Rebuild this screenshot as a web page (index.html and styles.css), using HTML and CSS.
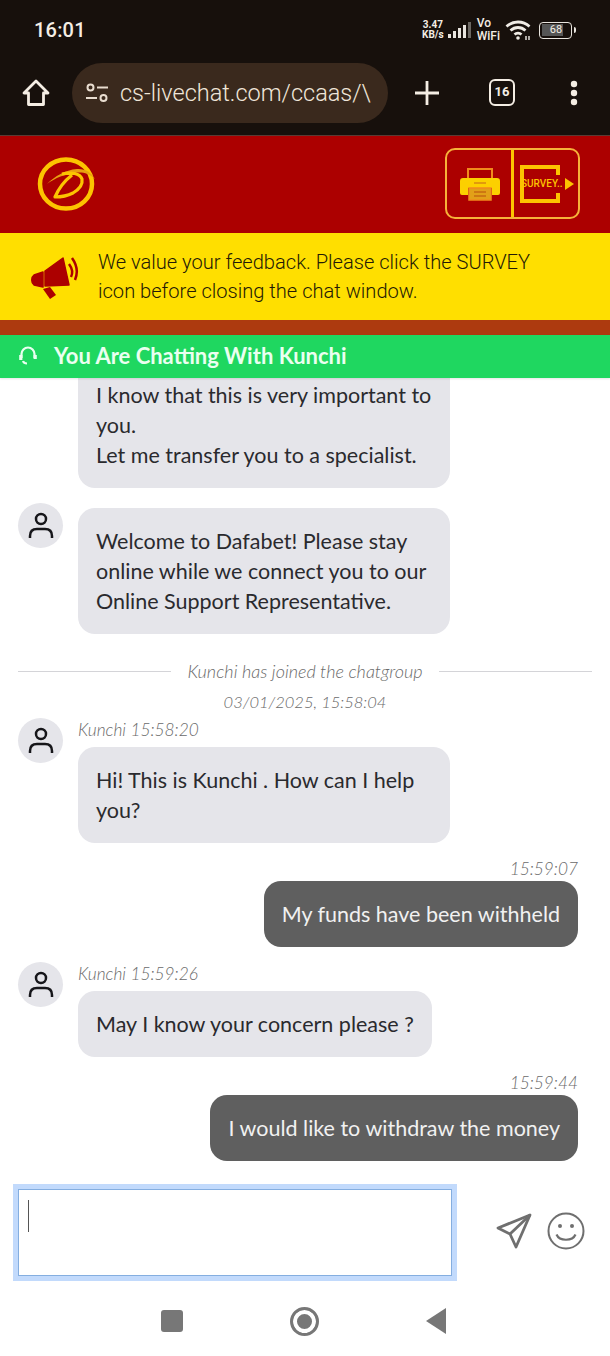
FILE: index.html
```html
<!DOCTYPE html>
<html lang="en">
<head>
<meta charset="utf-8">
<title>Live chat</title>
<link rel="stylesheet" href="styles.css">
</head>
<body>
<div class="phone">
  <div class="chrome">
    <div class="status">
      <span class="clock">16:01</span>
      <div class="status-icons">
        <span class="speed">3.47<br>KB/s</span>
        <svg class="signal" width="24" height="18" viewBox="0 0 24 18"><rect x="0" y="12" width="3" height="4" fill="#e8e4de"/><rect x="5" y="9" width="3" height="7" fill="#e8e4de"/><rect x="10" y="6" width="3" height="10" fill="#e8e4de"/><rect x="15" y="3" width="3" height="13" fill="#e8e4de"/><rect x="20" y="0" width="3" height="16" fill="#6b6762"/></svg>
        <span class="vowifi">Vo<br>WiFi</span>
        <svg class="wifi" width="27" height="22" viewBox="0 0 27 22" fill="none" stroke="#f0ece6" stroke-width="2.8"><path d="M1.500 7.500C8 1.500 18 1.500 24.500 7.500"/><path d="M5.500 11.500C10 7.500 16 7.500 20.500 11.500"/><path d="M9.500 15.500C11.500 13.800 14.500 13.800 16.500 15.500"/><circle cx="13" cy="19" r="1.800" fill="#f0ece6" stroke="none"/><path d="M21 21v-4M24 21v-4" stroke-width="1.400"/></svg>
        <div class="battery"><span class="battery-level">68</span></div>
      </div>
    </div>
    <div class="toolbar">
      <svg class="home" width="28" height="28" viewBox="0 0 28 28" fill="none" stroke="#f4ede4" stroke-width="2.800" stroke-linejoin="round"><path d="M14 2L2 14h4.500v11.500h15V14H26Z"/></svg>
      <div class="url">
        <svg width="24" height="20" viewBox="0 0 24 20" fill="none" stroke="#e8dccf" stroke-width="2"><circle cx="5.500" cy="4.500" r="3"/><path d="M12 4.500h11M1 15h11"/><circle cx="18.500" cy="15" r="3"/></svg>
        <span class="url-text">cs-livechat.com/ccaas/\</span>
      </div>
      <svg class="plus" width="26" height="26" viewBox="0 0 26 26" stroke="#f4ede4" stroke-width="2.800"><path d="M13 1v24M1 13h24"/></svg>
      <div class="tabs">16</div>
      <svg class="dots" width="8" height="26" viewBox="0 0 8 26" fill="#f4ede4"><circle cx="4" cy="4" r="3.200"/><circle cx="4" cy="13" r="3.200"/><circle cx="4" cy="22" r="3.200"/></svg>
    </div>
  </div>

  <header class="brand">
    <svg class="logo" width="60" height="56" viewBox="0 0 60 56" fill="none">
      <ellipse cx="29" cy="27" rx="26" ry="24.500" stroke="#fcc400" stroke-width="4.500"/>
      <path d="M10 27C18 19 28 13 40 12C48 11.500 54 15 58 22C52 16 46 15 40 15.500C28 17 18 21 10 27Z" fill="#e8a010"/>
      <path d="M25 17C34 15 43 16 45 22C46 28 41 33 36 36C30 39 24 40 18 40C21 33 26 25 35 18" stroke="#fcc400" stroke-width="3.200" stroke-linejoin="round"/>
    </svg>
    <div class="actions">
      <div class="action action-print">
        <svg width="40" height="34" viewBox="0 0 40 34"><path d="M8 2h24v11H8Z" fill="none" stroke="#f08a1c" stroke-width="2"/><path d="M3 11h34a3 3 0 0 1 3 3v12a2 2 0 0 1-2 2h-6v-7H8v7H2a2 2 0 0 1-2-2V14a3 3 0 0 1 3-3Z" fill="#fcd000"/><path d="M14 16h12" stroke="#d98a10" stroke-width="1.500"/><path d="M9 21h22v12H9Z" fill="#e2a018" stroke="#f08a1c" stroke-width="1.500"/><path d="M14 25h12M14 29h12" stroke="#c66a10" stroke-width="1.500"/></svg>
      </div>
      <div class="action action-survey">
        <div class="survey-box"><span class="survey-text">SURVEY..</span></div>
        <span class="survey-arrow"></span>
      </div>
    </div>
  </header>

  <div class="notice">
    <svg class="horn" width="50" height="44" viewBox="0 0 50 44" fill="#ac0000"><path d="M14 15L32 2L38 29L14 30Z" stroke="#ac0000" stroke-width="1.500" stroke-linejoin="round"/><path d="M12 16L3 19C0 21 0 27 3 29L12 31Z" stroke="#ac0000" stroke-width="1.500" stroke-linejoin="round"/><path d="M12 33L19 31L25 39L19 43Z"/><path d="M38 8C41 12 42 17 40 21" fill="none" stroke="#ac0000" stroke-width="2.500"/><path d="M41 2C46 9 47 17 44 24" fill="none" stroke="#ac0000" stroke-width="2.500"/></svg>
    <p class="notice-text">We value your feedback. Please click the SURVEY<br>icon before closing the chat window.</p>
  </div>
  <div class="strip"></div>

  <div class="agent-bar">
    <svg width="18" height="20" viewBox="0 0 18 20" fill="none" stroke="#e9fff0" stroke-width="2.200"><path d="M2.500 13V9a6.500 6.500 0 0 1 13 0v4"/><path d="M1.800 10v5M16.200 10v4" stroke-width="3.200"/><path d="M4 16c.5 1.500 2 2.500 4 2.500"/></svg>
    <span>You Are Chatting With Kunchi</span>
  </div>

  <main class="chat">
    <div class="row">
      <div class="avatar-gap"></div>
      <div class="bubble bubble-agent bubble-wide">I know that this is very important to you.<br>Let me transfer you to a specialist.</div>
    </div>
    <div class="row row-next">
      <div class="avatar"><svg width="26" height="30" viewBox="0 0 26 30" fill="none" stroke="#16161a" stroke-width="2.500"><circle cx="13" cy="8" r="5"/><path d="M2 27v-2c0-5 3-7 7-7h8c4 0 7 2 7 7v2"/></svg></div>
      <div class="bubble bubble-agent bubble-offset bubble-wide">Welcome to Dafabet! Please stay online while we connect you to our Online Support Representative.</div>
    </div>
    <div class="system">
      <span class="rule"></span>
      <span class="system-text"><em>Kunchi</em> has joined the chatgroup</span>
      <span class="rule"></span>
    </div>
    <div class="date">03/01/2025, 15:58:04</div>
    <div class="row row-first">
      <div class="avatar"><svg width="26" height="30" viewBox="0 0 26 30" fill="none" stroke="#16161a" stroke-width="2.500"><circle cx="13" cy="8" r="5"/><path d="M2 27v-2c0-5 3-7 7-7h8c4 0 7 2 7 7v2"/></svg></div>
      <div class="msg">
        <div class="meta">Kunchi 15:58:20</div>
        <div class="bubble bubble-agent bubble-wide">Hi! This is Kunchi . How can I help you?</div>
      </div>
    </div>
    <div class="own">
      <div class="meta">15:59:07</div>
      <div class="bubble bubble-own">My funds have been withheld</div>
    </div>
    <div class="row row-next">
      <div class="avatar"><svg width="26" height="30" viewBox="0 0 26 30" fill="none" stroke="#16161a" stroke-width="2.500"><circle cx="13" cy="8" r="5"/><path d="M2 27v-2c0-5 3-7 7-7h8c4 0 7 2 7 7v2"/></svg></div>
      <div class="msg">
        <div class="meta">Kunchi 15:59:26</div>
        <div class="bubble bubble-agent">May I know your concern please ?</div>
      </div>
    </div>
    <div class="own">
      <div class="meta">15:59:44</div>
      <div class="bubble bubble-own">I would like to withdraw the money</div>
    </div>
  </main>

  <footer class="composer">
    <div class="input"><span class="caret"></span></div>
    <svg class="send" width="36" height="36" viewBox="0 0 36 36" fill="none" stroke="#6f6f6f" stroke-width="2.800" stroke-linejoin="round"><path d="M34 2L2 15l12 6l6 13Z"/><path d="M34 2L14 21"/></svg>
    <svg class="smile" width="38" height="38" viewBox="0 0 38 38" fill="none" stroke="#6f6f6f" stroke-width="2"><circle cx="19" cy="19" r="17.500"/><circle cx="13" cy="14" r="2" fill="#6f6f6f" stroke="none"/><circle cx="25" cy="14" r="2" fill="#6f6f6f" stroke="none"/><path d="M9.500 22.500c3 7 16 7 19 0" stroke-width="2.200"/></svg>
  </footer>

  <nav class="nav">
    <span class="nav-square"></span>
    <span class="nav-home"></span>
    <span class="nav-back"></span>
  </nav>
</div>
</body>
</html>
```

FILE: styles.css
```css
* { box-sizing: border-box; }
html, body { margin: 0; padding: 0; }
body { width: 610px; height: 1356px; overflow: hidden; background: #fff; }
.phone { width: 610px; height: 1356px; display: flex; flex-direction: column; overflow: hidden; font-family: "Lato", "Liberation Sans", sans-serif; }

.chrome { height: 136px; background: #17100c; border-bottom: 1px solid #5b3a34; color: #f4ede4; font-family: "Roboto", sans-serif; flex: none; }
.status { height: 60px; display: flex; align-items: center; justify-content: space-between; padding: 0 38px 0 34px; }
.clock { font-size: 20px; font-weight: 500; letter-spacing: .2px; }
.status-icons { display: flex; align-items: center; gap: 4px; }
.speed, .vowifi { font-weight: 700; font-size: 10px; line-height: 10px; }
.speed { text-align: center; }
.vowifi { font-weight: 500; font-size: 12px; line-height: 13px; margin-left: 1px; }
.signal { margin-top: 2px; }
.wifi { margin: 0 3px 0 1px; }
.battery { width: 33px; height: 17px; border: 1.500px solid #e8e4de; border-radius: 4px; padding: 1.500px; position: relative; }
.battery::after { content: ""; position: absolute; right: -5px; top: 4px; width: 2px; height: 6px; background: #e8e4de; border-radius: 0 2px 2px 0; }
.battery-level { display: block; height: 100%; width: 21px; background: #555; font-size: 11px; line-height: 11px; text-align: center; padding-left: 8px; white-space: nowrap; }
.toolbar { height: 75px; display: flex; align-items: center; padding: 0 0 10px 22px; }
.home { flex: none; }
.url { width: 316px; height: 60px; margin-left: 22px; padding: 0 12px 0 13px; background: #3a291d; border-radius: 30px; display: flex; align-items: center; gap: 11px; flex: none; overflow: hidden; }
.url svg { flex: none; }
.url-text { font-size: 23.500px; font-weight: 300; white-space: nowrap; overflow: hidden; color: #f0e6da; }
.plus { margin-left: 26px; flex: none; }
.tabs { margin-left: 49px; width: 26px; height: 27px; border: 2.500px solid #f4ede4; border-radius: 6px; font-size: 13px; font-weight: 700; line-height: 22px; text-align: center; flex: none; }
.dots { margin-left: 55px; flex: none; }

.brand { height: 97px; background: #ac0000; display: flex; align-items: center; justify-content: space-between; padding: 0 30px 0 37px; flex: none; }
.actions { width: 135px; height: 71px; border: 2px solid #f6b23a; border-radius: 10px; display: flex; margin-top: -2px; }
.action { display: flex; align-items: center; }
.action-print { width: 67px; justify-content: center; border-right: 3px solid #fcc400; padding-left: 2px; padding-right: 1px; }
.action-survey { flex: 1; padding-left: 6px; position: relative; }
.survey-box { width: 40px; height: 38px; border: 4px solid #fcc400; border-right-color: transparent; display: flex; align-items: center; position: relative; }
.survey-box::before, .survey-box::after { content: ""; position: absolute; right: -4px; width: 4px; height: 10px; background: #fcc400; }
.survey-box::before { top: -4px; }
.survey-box::after { bottom: -4px; }
.survey-text { font-family: "Roboto", sans-serif; font-size: 10px; font-weight: 500; color: #fcc400; white-space: nowrap; margin-left: -3px; }
.survey-arrow { width: 0; height: 0; border-left: 9px solid #fcc400; border-top: 6px solid transparent; border-bottom: 6px solid transparent; margin-left: 5px; }

.notice { height: 87px; background: #ffdf00; display: flex; align-items: center; padding: 0 0 0 31px; gap: 17px; flex: none; }
.horn { flex: none; margin-top: 3px; }
.notice-text { margin: 0; font-family: "Roboto", sans-serif; font-weight: 300; font-size: 20.100px; line-height: 28.500px; color: #241a06; white-space: nowrap; }
.strip { height: 15px; background: #ad3a0f; flex: none; }
.agent-bar { height: 43px; background: #1fd760; color: #eafff0; display: flex; align-items: center; gap: 17px; padding: 0 0 3px 19px; font-size: 22px; font-weight: 700; flex: none; box-shadow: 0 1px 2px rgba(0,0,0,.1); z-index: 1; }

.chat { flex: 1; min-height: 0; display: flex; flex-direction: column; justify-content: flex-end; overflow: hidden; padding: 0 32px 22px 18px; color: #2a2a2e; }
.row { display: flex; gap: 15px; flex: none; }
.row-next { margin-top: 15px; }
.row-first { margin-top: 6px; }
.avatar-gap { width: 45px; flex: none; }
.avatar { width: 45px; height: 45px; border-radius: 50%; background: #e5e5ea; display: flex; align-items: center; justify-content: center; flex: none; }
.msg { display: flex; flex-direction: column; align-items: flex-start; }
.bubble { font-size: 21.500px; line-height: 30px; padding: 18px; border-radius: 17px; flex: none; }
.bubble-agent { background: #e5e5ea; }
.bubble-wide { width: 372px; }
.bubble-offset { margin-top: 5px; }
.bubble-own { background: #5f5f5f; color: #f1f1f1; }
.meta { font-style: italic; font-weight: 300; font-size: 17.300px; line-height: 24px; color: #6a6a6a; margin-bottom: 5px; }
.own { display: flex; flex-direction: column; align-items: flex-end; margin-top: 14px; flex: none; }
.own .meta { margin-bottom: 0; }
.system { display: flex; align-items: center; gap: 16px; margin: 27px -14px 0 0; height: 20px; flex: none; }
.rule { flex: 1; height: 1px; background: #d4d4d8; }
.system-text { font-size: 18px; font-weight: 300; color: #6a6a6a; font-style: italic; }
.system-text em { font-style: italic; }
.date { text-align: center; font-style: italic; font-weight: 300; font-size: 16.500px; line-height: 20px; color: #6a6a6a; margin: 11px -14px 0 0; flex: none; }

.composer { height: 98px; padding: 1px 0 0 13px; display: flex; align-items: flex-start; flex: none; }
.input { width: 444px; height: 97px; border: 5px solid #c2dafc; outline: 1px solid #84aee0; outline-offset: -6px; background: #fff; padding: 11px 10px; }
.caret { display: block; width: 1px; height: 32px; background: #555; }
.send { margin: 29px 0 0 39px; flex: none; }
.smile { margin: 28px 0 0 15px; flex: none; }

.nav { height: 75px; flex: none; display: flex; align-items: center; padding: 5px 0 0 161px; }
.nav-square { width: 22px; height: 22px; background: #777; border-radius: 3px; flex: none; }
.nav-home { width: 29px; height: 29px; border: 3px solid #777; border-radius: 50%; margin-left: 107px; flex: none; background: #777; box-shadow: inset 0 0 0 4px #fff; }
.nav-back { width: 0; height: 0; border-right: 20px solid #777; border-top: 13px solid transparent; border-bottom: 13px solid transparent; margin-left: 107px; flex: none; }
```
